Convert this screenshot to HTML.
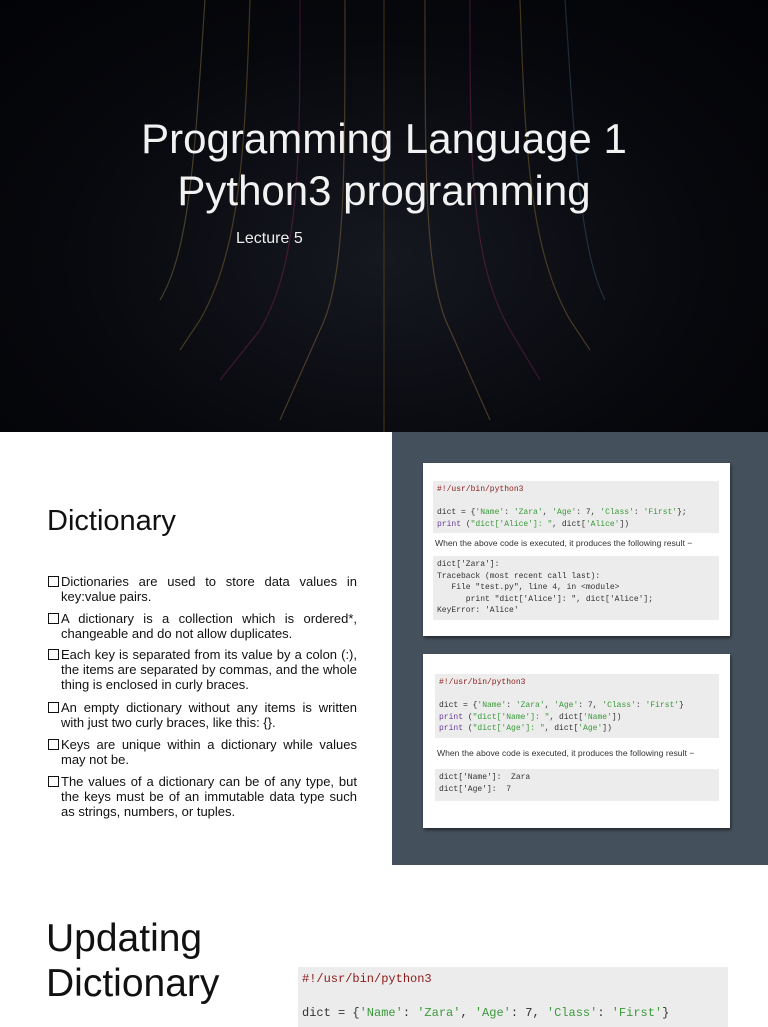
<!DOCTYPE html>
<html><head><meta charset="utf-8"><style>
*{margin:0;padding:0;box-sizing:border-box}
body{width:768px;height:1024px;overflow:hidden;background:#fff;font-family:"Liberation Sans",sans-serif;position:relative}
.s1{position:absolute;left:0;top:0;width:768px;height:432px;background:radial-gradient(ellipse at 50% 60%,#161820 0%,#07080d 60%,#020306 100%);overflow:hidden}
.t{position:absolute;left:0;width:768px;text-align:center;color:#f2f2f2;font-size:42px;letter-spacing:0px}
.abs{position:absolute}
.panel{position:absolute;left:392px;top:432px;width:376px;height:433px;background:#44505c}
.card{position:absolute;background:#fff;box-shadow:1px 2px 3px rgba(0,0,0,.5)}
.code{position:absolute;background:#ececec;font-family:"Liberation Mono",monospace;font-size:8px;line-height:11.5px;color:#333;padding:3px 4px;white-space:pre}
.r{color:#8b1a1a}.g{color:#3a9a3a}.p{color:#6a3d9a}
.txt{position:absolute;font-size:8.6px;color:#333;white-space:nowrap}
ul{list-style:none}
li{position:absolute;left:47px;width:310px;font-size:13px;line-height:15px;color:#111;padding-left:14px;text-align:justify}
li:before{content:"";position:absolute;left:1px;top:2px;width:9px;height:9px;border:1.5px solid #111}
</style></head><body>
<div class="s1">
<svg class="abs" style="left:0;top:0" width="768" height="432">
<g fill="none" stroke-width="1.2" opacity=".3">
<path d="M205 0 C195 150 190 250 160 300" stroke="#c8b060"/>
<path d="M250 0 C245 150 240 250 200 320 L180 350" stroke="#c8a040"/>
<path d="M300 0 C300 160 300 260 260 330 L220 380" stroke="#b03070"/>
<path d="M345 0 C345 180 345 280 320 330 L280 420" stroke="#d0a050"/>
<path d="M384 0 L384 432" stroke="#b08030"/>
<path d="M425 0 C425 180 425 280 450 330 L490 420" stroke="#d0a050"/>
<path d="M470 0 C470 160 470 260 510 330 L540 380" stroke="#b03070"/>
<path d="M520 0 C525 150 530 250 570 320 L590 350" stroke="#c8a040"/>
<path d="M565 0 C575 150 580 250 605 300" stroke="#5080a0"/>
</g></svg>
<div class="t" style="top:115px">Programming Language 1</div>
<div class="t" style="top:167px">Python3 programming</div>
<div class="abs" style="left:236px;top:230px;color:#eee;font-size:16px">Lecture 5</div>
</div>

<div class="abs" style="left:47px;top:505px;font-size:29px;color:#111">Dictionary</div>
<ul>
<li style="top:574px">Dictionaries are used to store data values in key:value pairs.</li>
<li style="top:611px">A dictionary is a collection which is ordered*, changeable and do not allow duplicates.</li>
<li style="top:647px">Each key is separated from its value by a colon (:), the items are separated by commas, and the whole thing is enclosed in curly braces.</li>
<li style="top:700px">An empty dictionary without any items is written with just two curly braces, like this: {}.</li>
<li style="top:737px">Keys are unique within a dictionary while values may not be.</li>
<li style="top:774px">The values of a dictionary can be of any type, but the keys must be of an immutable data type such as strings, numbers, or tuples.</li>
</ul>

<div class="panel"></div>
<div class="card" style="left:423px;top:463px;width:307px;height:173px">
<div class="code" style="left:10px;top:18px;width:286px"><span class="r">#!/usr/bin/python3</span>

dict = {<span class="g">'Name'</span>: <span class="g">'Zara'</span>, <span class="g">'Age'</span>: 7, <span class="g">'Class'</span>: <span class="g">'First'</span>};
<span class="p">print</span> (<span class="g">"dict['Alice']: "</span>, dict[<span class="g">'Alice'</span>])</div>
<div class="txt" style="left:12px;top:75px">When the above code is executed, it produces the following result −</div>
<div class="code" style="left:10px;top:93px;width:286px;height:64px">dict['Zara']:
Traceback (most recent call last):
   File "test.py", line 4, in &lt;module&gt;
      print "dict['Alice']: ", dict['Alice'];
KeyError: 'Alice'</div>
</div>
<div class="card" style="left:423px;top:654px;width:307px;height:174px">
<div class="code" style="left:12px;top:20px;width:284px;height:64px"><span class="r">#!/usr/bin/python3</span>

dict = {<span class="g">'Name'</span>: <span class="g">'Zara'</span>, <span class="g">'Age'</span>: 7, <span class="g">'Class'</span>: <span class="g">'First'</span>}
<span class="p">print</span> (<span class="g">"dict['Name']: "</span>, dict[<span class="g">'Name'</span>])
<span class="p">print</span> (<span class="g">"dict['Age']: "</span>, dict[<span class="g">'Age'</span>])</div>
<div class="txt" style="left:14px;top:94px">When the above code is executed, it produces the following result −</div>
<div class="code" style="left:12px;top:115px;width:284px;height:32px">dict['Name']:  Zara
dict['Age']:  7</div>
</div>

<div class="abs" style="left:46px;top:916px;font-size:39px;line-height:45px;color:#111">Updating<br>Dictionary</div>
<div class="code" style="left:298px;top:967px;width:430px;height:60px;font-size:12px;line-height:17px;padding:4px 4px"><span class="r">#!/usr/bin/python3</span>

dict = {<span class="g">'Name'</span>: <span class="g">'Zara'</span>, <span class="g">'Age'</span>: 7, <span class="g">'Class'</span>: <span class="g">'First'</span>}</div>
</body></html>
